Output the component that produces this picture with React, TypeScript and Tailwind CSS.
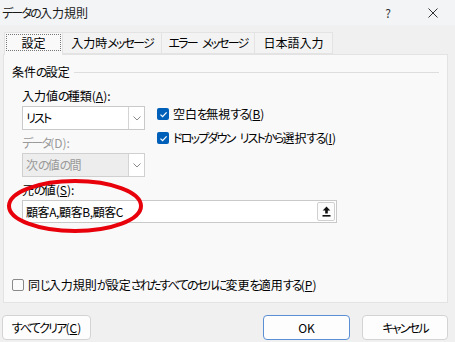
import React from 'react';

const font = { fontFamily: '"Noto Sans CJK JP", "Noto Sans", sans-serif', fontFeatureSettings: '"palt"' };

// kana in the Windows UI font run narrower than kanji, so tighten them
const J = ({ t }: { t: string }) => (
  <>
    {t.split(/([\u3040-\u30ff]+)/).map((part, i) =>
      part === ' ' ? (
        <span key={i} className="inline-block w-[5px]" />
      ) : /[\u3040-\u30ff]/.test(part) ? (
        <span key={i} className="tracking-[-1.8px]">
          {part}
        </span>
      ) : (
        <React.Fragment key={i}>{part}</React.Fragment>
      )
    )}
  </>
);

const Check = ({ checked }: { checked: boolean }) =>
  checked ? (
    <div className="w-[12px] h-[12px] rounded-[2px] bg-[#005fb8] flex items-center justify-center">
      <svg width="9" height="9" viewBox="0 0 9 9">
        <path d="M1.5 4.6 L3.6 6.6 L7.6 2.4" stroke="white" strokeWidth="1.3" fill="none" />
      </svg>
    </div>
  ) : (
    <div className="w-[12px] h-[12px] rounded-[2px] border border-[#8a8a8a] bg-[#fbfbfb]" />
  );

const Chevron = ({ color }: { color: string }) => (
  <svg width="8" height="5" viewBox="0 0 8 5">
    <path d="M0.5 0.5 L4 4 L7.5 0.5" stroke={color} strokeWidth="1" fill="none" />
  </svg>
);

const Select = ({ value, disabled }: { value: string; disabled?: boolean }) => (
  <div
    className={`w-[123px] h-[24px] border flex ${
      disabled ? 'bg-[#ededed] border-[#d0d0d0] text-[#9a9a9a]' : 'bg-white border-[#c9c9c9] text-black'
    }`}
  >
    <div className="flex-1 flex items-center pl-[3px]">
      <J t={value} />
    </div>
    <div className="w-[16px] border-l border-[#d4d4d4] bg-white flex items-center justify-center">
      <Chevron color="#8a8a8a" />
    </div>
  </div>
);

export default function App() {
  return (
    <div className="w-[455px] h-[342px] bg-[#f0f0f0] relative overflow-hidden text-[12px] text-black" style={font}>
      {/* title bar */}
      <div className="h-[25px] flex items-center bg-[#f3f4f6] pl-[2px] pr-[17px]">
        <span className="text-[12px] text-[#1a1a1a]">
          <J t="データの入力規則" />
        </span>
        <span className="ml-auto text-[12px] text-[#333]">?</span>
        <svg className="ml-[37px]" width="10" height="10" viewBox="0 0 10 10">
          <path d="M0.5 0.5 L9.5 9.5 M9.5 0.5 L0.5 9.5" stroke="#333" strokeWidth="1" />
        </svg>
      </div>

      {/* tabs */}
      <div className="flex pl-[4px] mt-[7px] h-[22px]">
        <div className="w-[59px] h-[23px] bg-[#f9f9f9] border border-b-0 border-[#e3e3e3] p-[1px] relative z-10">
          <div className="w-full h-[17px] border border-dotted border-[#777] flex items-center justify-center">設定</div>
        </div>
        <div className="w-[99px] border border-l-0 border-[#e3e3e3] bg-[#f3f3f3] flex items-center justify-center">
          <J t="入力時メッセージ" />
        </div>
        <div className="w-[93px] border border-l-0 border-[#e3e3e3] bg-[#f3f3f3] flex items-center justify-center">
          <J t="エラー メッセージ" />
        </div>
        <div className="w-[78px] border border-l-0 border-[#e3e3e3] bg-[#f3f3f3] flex items-center justify-center">日本語入力</div>
      </div>

      {/* panel */}
      <div className="ml-[3px] w-[445px] h-[249px] border border-[#e3e3e3] bg-[#f9f9f9] flex flex-col">
        <div className="pt-[9px] h-[25px] flex items-center pl-[8px] pr-[8px]">
          <span>
            <J t="条件の設定" />
          </span>
          <div className="flex-1 h-px bg-[#dedede] ml-[4px]" />
        </div>

        <div className="pl-[18px]">
          <div className="mt-[8px] h-[16px] flex items-center">
            <J t="入力値の種類(" />
            <span className="underline">A</span>):
          </div>
          <div className="flex mt-[2px]">
            <div className="flex flex-col">
              <Select value="リスト" />
              <div className="mt-[5px] h-[16px] flex items-center text-[#9a9a9a]">
                <J t="データ(D):" />
              </div>
              <div className="mt-[2px]">
                <Select value="次の値の間" disabled />
              </div>
            </div>
            <div className="ml-[12px] flex flex-col gap-[8px]">
              <div className="h-[16px] flex items-center gap-[4px]">
                <Check checked />
                <span>
                  <J t="空白を無視する(" />
                  <span className="underline">B</span>)
                </span>
              </div>
              <div className="h-[16px] flex items-center gap-[4px]">
                <Check checked />
                <span>
                  <J t="ドロップダウン リストから選択する(" />
                  <span className="underline">I</span>)
                </span>
              </div>
            </div>
          </div>
          <div className="mt-[5px] h-[16px] flex items-center">
            <J t="元の値(" />
            <span className="underline">S</span>):
          </div>
          <div className="mt-[2px] w-[315px] h-[23px] bg-white border border-[#c9c9c9] flex items-center pl-[3px] pr-[1px]">
            <span className="flex-1 text-[12px] tracking-[-0.4px]">顧客A,顧客B,顧客C</span>
            <div className="w-[18px] h-[19px] border border-[#d0d0d0] rounded-[2px] bg-[#fcfcfc] flex items-center justify-center">
              <svg width="9" height="11" viewBox="0 0 9 11">
                <path d="M4.5 0.5 L8.3 4.5 L5.8 4.5 L5.8 7.5 L3.2 7.5 L3.2 4.5 L0.7 4.5 Z" fill="#111" />
                <rect x="0.5" y="9" width="8" height="1.6" fill="#111" />
              </svg>
            </div>
          </div>
        </div>

        <div className="mt-auto pb-[9px] pl-[8px] h-[25px] flex items-center gap-[4px]">
          <Check checked={false} />
          <span>
            <J t="同じ入力規則が設定されたすべてのセルに変更を適用する(" />
            <span className="underline">P</span>)
          </span>
        </div>
      </div>

      {/* buttons */}
      <div className="flex mt-[12px] pl-[2px] pr-[7px]">
        <button className="w-[89px] h-[25px] rounded-[4px] border border-[#d3d3d3] bg-[#fdfdfd]">
          <J t="すべてクリア(" />
          <span className="underline">C</span>)
        </button>
        <button className="ml-auto w-[87px] h-[25px] rounded-[4px] border border-[#5b8fd3] bg-[#fdfdfd]">OK</button>
        <button className="ml-[12px] w-[86px] h-[25px] rounded-[4px] border border-[#d3d3d3] bg-[#fdfdfd]">
          <J t="キャンセル" />
        </button>
      </div>

      {/* red annotation */}
      <svg className="absolute left-[4px] top-[177px]" width="142" height="58" viewBox="0 0 142 58">
        <ellipse cx="71" cy="29" rx="66" ry="25" stroke="#e8000b" strokeWidth="4" fill="none" />
      </svg>
    </div>
  );
}
